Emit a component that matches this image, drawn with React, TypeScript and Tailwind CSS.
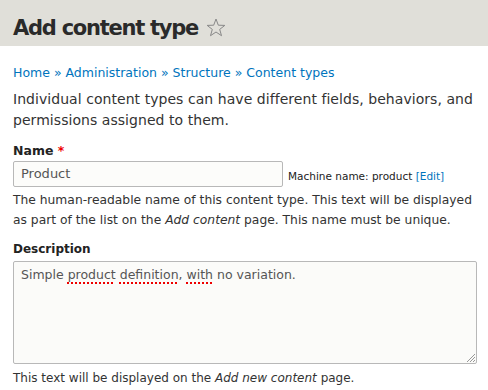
import React from "react";

const font = { fontFamily: '"DejaVu Sans", Verdana, sans-serif' };

const Squiggle = ({ children }: { children: React.ReactNode }) => (
  <span className="underline decoration-dotted decoration-[#e00] decoration-2 underline-offset-[3px]">{children}</span>
);

export default function App() {
  return (
    <div className="w-[488px] h-[390px] bg-white overflow-hidden text-[#333]" style={font}>
      <div className="h-[46px] bg-[#e0dfd9] flex items-center px-[13px] pt-[9px]">
        <h1 className="text-[21px] font-bold text-[#2a2a2a] tracking-[-1.25px] leading-[26px]">Add content type</h1>
        <svg className="ml-[8px]" width="20" height="19" viewBox="0 0 20 19">
          <path d="M10 1 L12.3 7.2 L18.8 7.4 L13.7 11.4 L15.5 17.7 L10 14 L4.5 17.7 L6.3 11.4 L1.2 7.4 L7.7 7.2 Z" fill="none" stroke="#888" strokeWidth="1" strokeLinejoin="round" />
        </svg>
      </div>
      <div className="px-[13px] pt-[18px]">
        <div className="text-[12.5px] text-[#0074bd] leading-[18px]">
          Home » Administration » Structure » Content types
        </div>
        <p className="text-[14px] leading-[21px] mt-[7px] tracking-[0.05px]">
          Individual content types can have different fields, behaviors, and permissions assigned to them.
        </p>
        <div className="mt-[11px]">
          <label className="block text-[12.5px] font-bold leading-[18px] text-[#222]">
            Name <span className="text-[#e00]">*</span>
          </label>
          <div className="flex items-center mt-[1px]">
            <div className="w-[270px] h-[26px] border border-[#b8b8b8] rounded-[2px] bg-[#fcfcfa] flex items-center px-[7px] text-[13px] text-[#555]">
              Product
            </div>
            <span className="ml-[5px] mt-[5px] text-[10.5px] text-[#222]">
              Machine name: product <span className="text-[#0074bd]">[Edit]</span>
            </span>
          </div>
          <p className="text-[12.3px] leading-[20px] mt-[3px]">
            The human-readable name of this content type. This text will be displayed as part of the list on the <em>Add content</em> page. This name must be unique.
          </p>
        </div>
        <div className="mt-[10px]">
          <label className="block text-[12px] font-bold leading-[18px] text-[#222]">Description</label>
          <div className="mt-[3px] w-[464px] h-[103px] border border-[#b8b8b8] rounded-[2px] bg-[#fbfbf9] relative px-[7px] pt-[4px] text-[12.5px] text-[#555]">
            Simple <Squiggle>product</Squiggle> <Squiggle>definition</Squiggle>, <Squiggle>with</Squiggle> no variation.
            <svg className="absolute right-0 bottom-0" width="10" height="10" viewBox="0 0 10 10">
              <path d="M9 1 L1 9 M9 4 L4 9 M9 7 L7 9" stroke="#999" strokeWidth="1" />
            </svg>
          </div>
          <p className="text-[12px] leading-[20px] mt-[4px]">
            This text will be displayed on the <em>Add new content</em> page.
          </p>
        </div>
      </div>
    </div>
  );
}
